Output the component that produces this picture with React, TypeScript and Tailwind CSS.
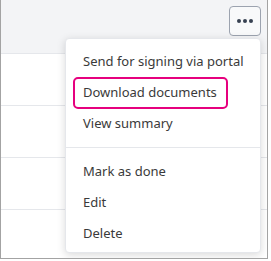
import React from "react";

export default function App() {
  const font = { fontFamily: '"Noto Sans", "Open Sans", sans-serif' };
  return (
    <div className="w-[271px] h-[261px] bg-white" style={font}>
      <div className="relative w-[268px] h-[259px] border-l border-r border-b border-[#a3a3a3] overflow-hidden bg-white">
        <div className="h-[54px] bg-[#f3f4f6] border-b border-[#e5e7eb] flex justify-end pt-[6px] pr-[6px]">
          <button className="w-[32px] h-[30px] rounded-[4px] border border-[#9ca3af] bg-[#f8f9fa] flex items-center justify-center gap-[2px]">
            <span className="w-[4px] h-[4px] rounded-full bg-[#374151]" />
            <span className="w-[4px] h-[4px] rounded-full bg-[#374151]" />
            <span className="w-[4px] h-[4px] rounded-full bg-[#374151]" />
          </button>
        </div>
        <div className="h-[52px] border-b border-[#e5e7eb]" />
        <div className="h-[52px] border-b border-[#e5e7eb]" />
        <div className="h-[52px] border-b border-[#e5e7eb]" />

        <div className="absolute left-[64px] top-[38px] w-[196px] h-[215px] bg-white rounded-[4px] border border-[#e5e7eb] shadow-[0_2px_8px_rgba(0,0,0,0.15)] pt-[7px] text-[13px] text-[#3a3a3a] whitespace-nowrap">
          <div className="h-[31px] flex items-center pl-[17px]">Send for signing via portal</div>
          <div className="h-[31px] flex items-center pl-[7px]">
            <div className="w-[155px] h-[32px] flex items-center px-[8px] border-2 border-[#e6007e] rounded-[5px]">Download documents</div>
          </div>
          <div className="h-[31px] flex items-center pl-[17px]">View summary</div>
          <div className="my-[8px] border-t border-[#e5e7eb]" />
          <div className="h-[31px] flex items-center pl-[17px]">Mark as done</div>
          <div className="h-[31px] flex items-center pl-[17px]">Edit</div>
          <div className="h-[31px] flex items-center pl-[17px]">Delete</div>
        </div>
      </div>
    </div>
  );
}
